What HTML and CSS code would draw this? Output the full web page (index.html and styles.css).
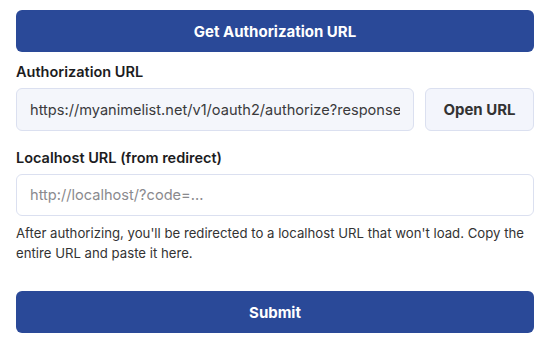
FILE: index.html
```html
<!DOCTYPE html>
<html lang="en">
<head>
    <meta charset="UTF-8">
    <meta name="viewport" content="width=device-width, initial-scale=1.0">
    <title>MyAnimeList Login</title>
    <link rel="stylesheet" href="styles.css">
</head>
<body>
    <div class="auth">
        <button class="primary" id="getUrl">Get Authorization URL</button>

        <label class="label" for="authUrl">Authorization URL</label>
        <div class="row">
            <input type="text" class="field readonly" id="authUrl" readonly
                value="https://myanimelist.net/v1/oauth2/authorize?response_type=code&client_id=">
            <button class="secondary" id="openUrl">Open URL</button>
        </div>

        <label class="label gap" for="redirect">Localhost URL (from redirect)</label>
        <input type="text" class="field" id="redirect" placeholder="http://localhost/?code=...">
        <p class="hint">After authorizing, you'll be redirected to a localhost URL that won't load. Copy the entire URL and paste it here.</p>

        <button class="primary submit" id="submit">Submit</button>
    </div>
</body>
</html>
```

FILE: styles.css
```css
body {
    font-family: 'Inter', 'Liberation Sans', sans-serif;
    background: #ffffff;
    color: #1c1c1e;
    margin: 0;
}
.auth {
    display: flex;
    flex-direction: column;
    padding: 10px 15px 12px 16px;
}
.primary {
    height: 42px;
    border: none;
    border-radius: 6px;
    background: #2a4998;
    color: #ffffff;
    font-family: inherit;
    font-size: 15px;
    font-weight: 700;
}
.label {
    margin-top: 10px;
    font-size: 14.5px;
    font-weight: 600;
    line-height: 20px;
}
.label.gap {
    margin-top: 17px;
}
.row {
    display: flex;
    gap: 11px;
    margin-top: 6px;
}
.field {
    box-sizing: border-box;
    height: 42px;
    width: 100%;
    padding: 0 13px;
    border: 1px solid #dbe0f0;
    border-radius: 6px;
    background: #ffffff;
    color: #3a3a3c;
    font-family: inherit;
    font-size: 14.6px;
    margin-top: 6px;
    outline: none;
}
.field::placeholder {
    color: #8a8a8e;
}
.row .field {
    flex: 1;
    min-width: 0;
    height: 43px;
    margin-top: 0;
    background: #f4f6fb;
}
.secondary {
    flex: 0 0 109px;
    height: 43px;
    border: 1px solid #dbe0f0;
    border-radius: 6px;
    background: #f3f5fc;
    color: #333333;
    font-family: inherit;
    font-size: 15px;
    font-weight: 700;
}
.hint {
    margin: 7px 0 0;
    font-size: 13.2px;
    line-height: 20px;
    color: #333333;
}
.submit {
    margin-top: 28px;
}
```
